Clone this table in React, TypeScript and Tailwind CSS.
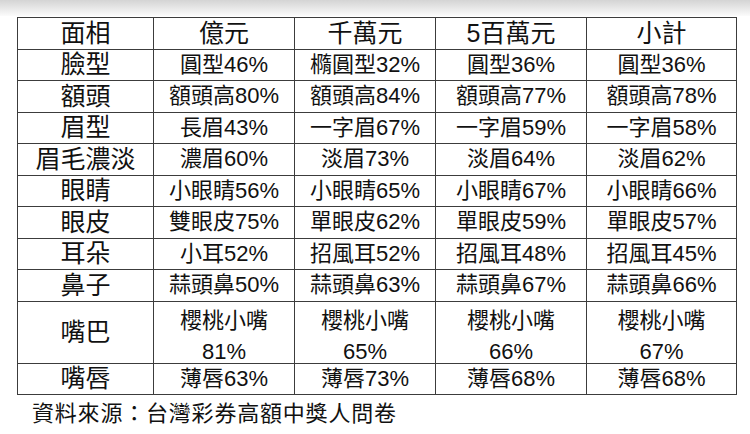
import React from 'react';

const headers = ['面相', '億元', '千萬元', '5百萬元', '小計'];

const rows: { label: string; cells: string[]; tall?: boolean }[] = [
  { label: '臉型', cells: ['圓型46%', '橢圓型32%', '圓型36%', '圓型36%'] },
  { label: '額頭', cells: ['額頭高80%', '額頭高84%', '額頭高77%', '額頭高78%'] },
  { label: '眉型', cells: ['長眉43%', '一字眉67%', '一字眉59%', '一字眉58%'] },
  { label: '眉毛濃淡', cells: ['濃眉60%', '淡眉73%', '淡眉64%', '淡眉62%'] },
  { label: '眼睛', cells: ['小眼睛56%', '小眼睛65%', '小眼睛67%', '小眼睛66%'] },
  { label: '眼皮', cells: ['雙眼皮75%', '單眼皮62%', '單眼皮59%', '單眼皮57%'] },
  { label: '耳朵', cells: ['小耳52%', '招風耳52%', '招風耳48%', '招風耳45%'] },
  { label: '鼻子', cells: ['蒜頭鼻50%', '蒜頭鼻63%', '蒜頭鼻67%', '蒜頭鼻66%'] },
  { label: '嘴巴', cells: ['櫻桃小嘴|81%', '櫻桃小嘴|65%', '櫻桃小嘴|66%', '櫻桃小嘴|67%'], tall: true },
  { label: '嘴唇', cells: ['薄唇63%', '薄唇73%', '薄唇68%', '薄唇68%'] },
];

const font = { fontFamily: '"Liberation Sans", "Noto Sans CJK TC", sans-serif' };

const cell = 'flex items-center border-r border-b border-[#3c3c3c]';

export default function App() {
  return (
    <div className="w-[750px] h-[434px] bg-white text-[#111] overflow-hidden" style={font}>
      <div className="h-[16px] bg-gradient-to-b from-[#d4d4d4] to-[#fbfbfb]" />
      <div className="ml-[17px] mt-[1px] w-[720px] grid grid-cols-[136px_141px_141px_151px_150px] border-t border-l border-[#3c3c3c]">
        {headers.map((h) => (
          <div key={h} className={`${cell} justify-center h-[31.5px] text-[25px] leading-none`}>
            {h}
          </div>
        ))}
        {rows.map((r) => (
          <React.Fragment key={r.label}>
            <div className={`${cell} justify-center ${r.tall ? 'h-[62px]' : 'h-[31.5px]'} text-[25px] leading-none`}>
              {r.label}
            </div>
            {r.cells.map((c, i) =>
              r.tall ? (
                <div key={i} className={`${cell} h-[62px] flex-col justify-start pt-[3px] text-[22px] leading-[31px]`}>
                  {c.split('|').map((t) => (
                    <span key={t}>{t}</span>
                  ))}
                </div>
              ) : (
                <div key={i} className={`${cell} justify-center h-[31.5px] text-[22px] leading-none`}>
                  {c}
                </div>
              )
            )}
          </React.Fragment>
        ))}
      </div>
      <div className="ml-[32px] mt-[4px] text-[22px] tracking-[0.8px] leading-[30px]">
        資料來源：台灣彩券高額中獎人問卷
      </div>
    </div>
  );
}
